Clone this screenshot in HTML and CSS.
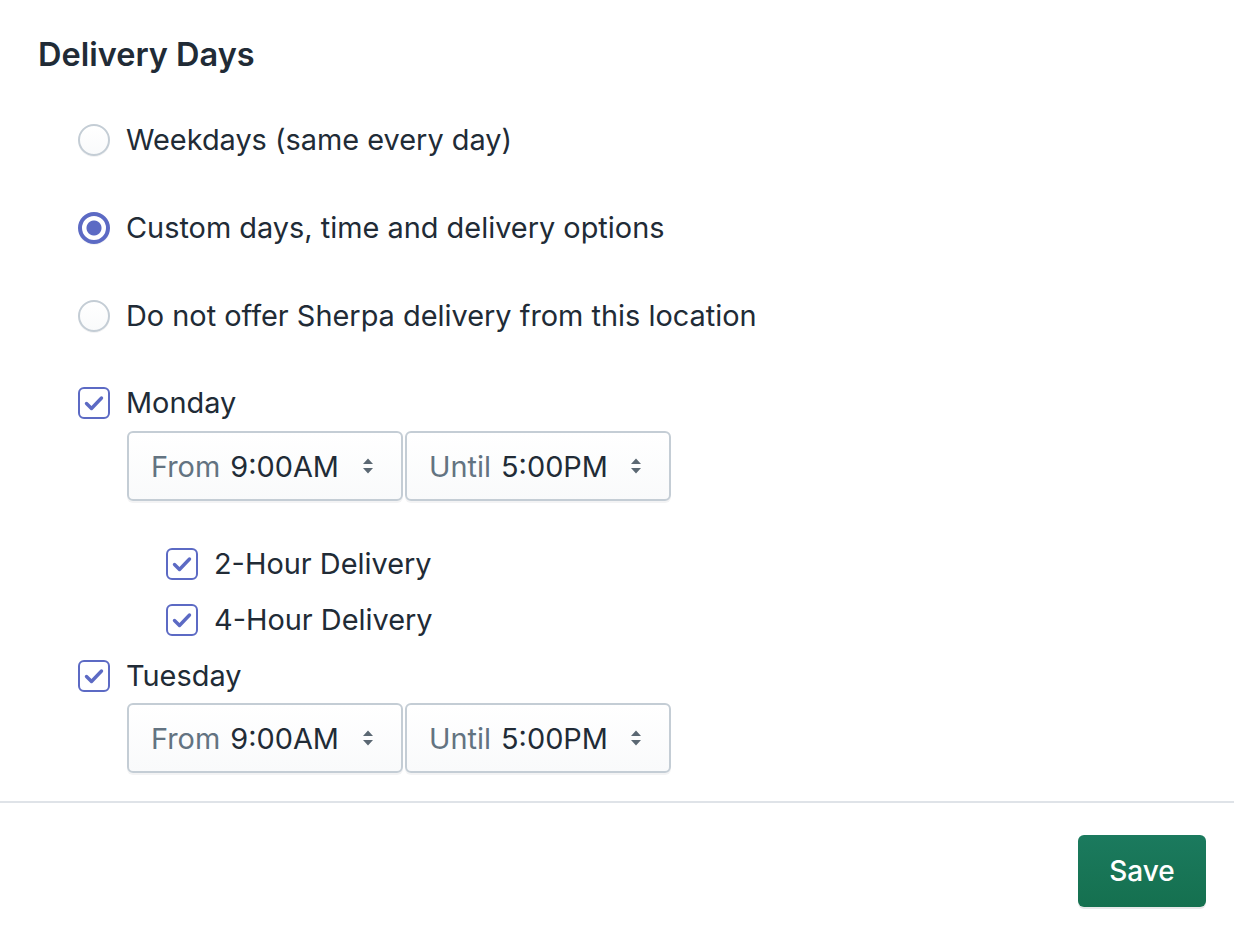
FILE: index.html
```html
<!DOCTYPE html>
<html lang="en">
<head>
  <meta charset="UTF-8">
  <title>Delivery Days</title>
  <link rel="stylesheet" href="styles.css">
</head>
<body>
  <div class="card">
    <div class="card-section">
      <h2 class="heading">Delivery Days</h2>

      <div class="choices">
        <label class="choice">
          <span class="radio"></span>
          <span class="choice-label">Weekdays (same every day)</span>
        </label>
        <label class="choice">
          <span class="radio radio-checked"></span>
          <span class="choice-label">Custom days, time and delivery options</span>
        </label>
        <label class="choice">
          <span class="radio"></span>
          <span class="choice-label">Do not offer Sherpa delivery from this location</span>
        </label>
      </div>

      <div class="days">
        <div class="day">
          <label class="choice">
            <span class="checkbox">
              <svg viewBox="0 0 28 28"><path d="M6.5 14.5l5 5L21.5 9"/></svg>
            </span>
            <span class="choice-label">Monday</span>
          </label>
          <div class="times">
            <div class="select select-from">
              <span class="select-prefix">From</span>
              <span class="select-value">9:00AM</span>
              <svg class="select-arrows" viewBox="0 0 12 20"><path d="M6 2.5l5 5.5H1z M6 17.5l5-5.5H1z"/></svg>
            </div>
            <div class="select select-until">
              <span class="select-prefix">Until</span>
              <span class="select-value">5:00PM</span>
              <svg class="select-arrows" viewBox="0 0 12 20"><path d="M6 2.5l5 5.5H1z M6 17.5l5-5.5H1z"/></svg>
            </div>
          </div>
          <div class="options">
            <label class="choice">
              <span class="checkbox">
                <svg viewBox="0 0 28 28"><path d="M6.5 14.5l5 5L21.5 9"/></svg>
              </span>
              <span class="choice-label">2-Hour Delivery</span>
            </label>
            <label class="choice">
              <span class="checkbox">
                <svg viewBox="0 0 28 28"><path d="M6.5 14.5l5 5L21.5 9"/></svg>
              </span>
              <span class="choice-label">4-Hour Delivery</span>
            </label>
          </div>
        </div>

        <div class="day">
          <label class="choice">
            <span class="checkbox">
              <svg viewBox="0 0 28 28"><path d="M6.5 14.5l5 5L21.5 9"/></svg>
            </span>
            <span class="choice-label">Tuesday</span>
          </label>
          <div class="times">
            <div class="select select-from">
              <span class="select-prefix">From</span>
              <span class="select-value">9:00AM</span>
              <svg class="select-arrows" viewBox="0 0 12 20"><path d="M6 2.5l5 5.5H1z M6 17.5l5-5.5H1z"/></svg>
            </div>
            <div class="select select-until">
              <span class="select-prefix">Until</span>
              <span class="select-value">5:00PM</span>
              <svg class="select-arrows" viewBox="0 0 12 20"><path d="M6 2.5l5 5.5H1z M6 17.5l5-5.5H1z"/></svg>
            </div>
          </div>
        </div>
      </div>
    </div>

    <div class="card-footer">
      <button type="button" class="btn-primary">Save</button>
    </div>
  </div>
</body>
</html>
```

FILE: styles.css
```css
body {
  margin: 0;
  font-family: Inter, 'Noto Sans', sans-serif;
  color: #212b36;
  background-color: #fff;
}

.card-section {
  padding: 35px 40px 28px 38px;
  border-bottom: 2px solid #dfe3e8;
}

.heading {
  margin: 0;
  font-size: 32.5px;
  line-height: 40px;
  font-weight: 600;
  color: #212b36;
}

.choices {
  display: flex;
  flex-direction: column;
  gap: 48px;
  margin: 45px 0 0 40px;
}

.choice {
  display: flex;
  align-items: center;
  gap: 16px;
  height: 40px;
}

.choice-label {
  font-size: 28.9px;
  line-height: 40px;
}

.radio {
  box-sizing: border-box;
  width: 32px;
  height: 32px;
  border-radius: 50%;
  border: 2px solid #c4cdd5;
  background: linear-gradient(#fff, #f9fafb);
  box-shadow: 0 1px 0 rgba(22,29,37,0.05);
}

.radio-checked {
  border: 4px solid #5c6ac4;
  background: radial-gradient(circle, #5c6ac4 0 7px, #fff 8px);
}

.checkbox {
  box-sizing: border-box;
  width: 32px;
  height: 32px;
  border-radius: 6px;
  border: 2px solid #5c6ac4;
  background: #fff;
  display: flex;
  align-items: center;
  justify-content: center;
}

.checkbox svg {
  width: 28px;
  height: 28px;
  fill: none;
  stroke: #5c6ac4;
  stroke-width: 3.4;
  stroke-linecap: round;
  stroke-linejoin: round;
}

.days {
  margin: 47px 0 0 40px;
}

.day + .day {
  margin-top: 16px;
}

.times {
  display: flex;
  gap: 2px;
  margin: 8px 0 0 49px;
}

.day + .day .times {
  margin-top: 7px;
}

.select {
  box-sizing: border-box;
  height: 70px;
  display: flex;
  align-items: center;
  padding: 0 27px 0 22px;
  border: 2px solid #c4cdd5;
  border-radius: 6px;
  background: linear-gradient(#fff, #f9fafb);
  box-shadow: 0 2px 0 rgba(22,29,37,0.05);
  font-size: 28.9px;
}

.select-from {
  width: 276px;
}

.select-until {
  width: 266px;
}

.select-prefix {
  color: #637381;
  margin-right: 10px;
}

.select-value {
  color: #212b36;
}

.select-arrows {
  width: 12px;
  height: 20px;
  margin-left: auto;
  fill: #5b6873;
}

.options {
  display: flex;
  flex-direction: column;
  gap: 16px;
  margin: 43px 0 0 88px;
}

.card-footer {
  display: flex;
  justify-content: flex-end;
  padding: 32px 28px 24px;
}

.btn-primary {
  width: 128px;
  height: 72px;
  border: none;
  border-radius: 6px;
  background: linear-gradient(#1b7a5e, #15704f);
  box-shadow: 0 2px 0 rgba(22,29,37,0.1);
  color: #fff;
  font-family: Inter, 'Noto Sans', sans-serif;
  font-size: 28px;
  font-weight: 500;
  cursor: pointer;
}
```
